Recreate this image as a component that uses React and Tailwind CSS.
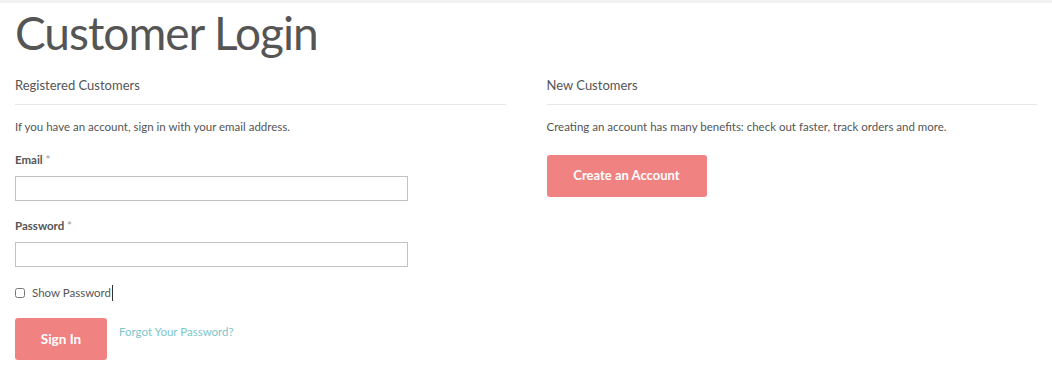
import { useState } from "react";

export default function App() {
  const [show, setShow] = useState(false);

  return (
    <div className="min-h-[365px] bg-white text-[#555] font-['Lato','Noto_Sans',sans-serif]">
      <div className="h-[3px] bg-[#f2f2f2]" />
      <div className="px-[15px]">
        <h1 className="text-[46px] leading-[56px] mt-[2px] text-[#555] font-normal tracking-[-1px]">
          Customer Login
        </h1>

        <div className="flex gap-[41px] mt-[14px]">
          {/* registered customers */}
          <div className="w-[491px]">
            <h2 className="text-[13px] leading-[20px] pb-[9px] border-b border-[#e6e6e6]">
              Registered Customers
            </h2>
            <p className="text-[11.5px] mt-[14px] leading-[16px]">
              If you have an account, sign in with your email address.
            </p>

            <label className="block text-[11.5px] font-bold mt-[17px] leading-[16px]">
              Email <span className="text-[#999] font-normal">*</span>
            </label>
            <input
              type="email"
              className="block mt-[8px] w-[393px] h-[25px] border border-[#c2c2c2] outline-none px-2 text-[13px]"
            />

            <label className="block text-[11.5px] font-bold mt-[17px] leading-[16px]">
              Password <span className="text-[#999] font-normal">*</span>
            </label>
            <input
              type={show ? "text" : "password"}
              className="block mt-[8px] w-[393px] h-[25px] border border-[#c2c2c2] outline-none px-2 text-[13px]"
            />

            <label className="flex items-center gap-[7px] mt-[18px] text-[11.5px] leading-[16px]">
              <input
                type="checkbox"
                checked={show}
                onChange={() => setShow(!show)}
                className="w-[10px] h-[10px]"
              />
              <span className="border-r border-[#333] pr-[1px]">Show Password</span>
            </label>

            <div className="flex items-start gap-[12px] mt-[17px]">
              <button className="w-[92px] h-[42px] rounded-[3px] bg-[#f08282] text-white text-[13.5px] font-bold">
                Sign In
              </button>
              <a href="#" className="text-[11.5px] text-[#7cc6cb] mt-[5px]">
                Forgot Your Password?
              </a>
            </div>
          </div>

          {/* new customers */}
          <div className="w-[491px]">
            <h2 className="text-[13px] leading-[20px] pb-[9px] border-b border-[#e6e6e6]">
              New Customers
            </h2>
            <p className="text-[11.5px] mt-[14px] leading-[16px]">
              Creating an account has many benefits: check out faster, track orders and more.
            </p>
            <button className="mt-[20px] w-[160px] h-[42px] rounded-[3px] bg-[#f08282] text-white text-[13px] font-bold">
              Create an Account
            </button>
          </div>
        </div>
      </div>
    </div>
  );
}
